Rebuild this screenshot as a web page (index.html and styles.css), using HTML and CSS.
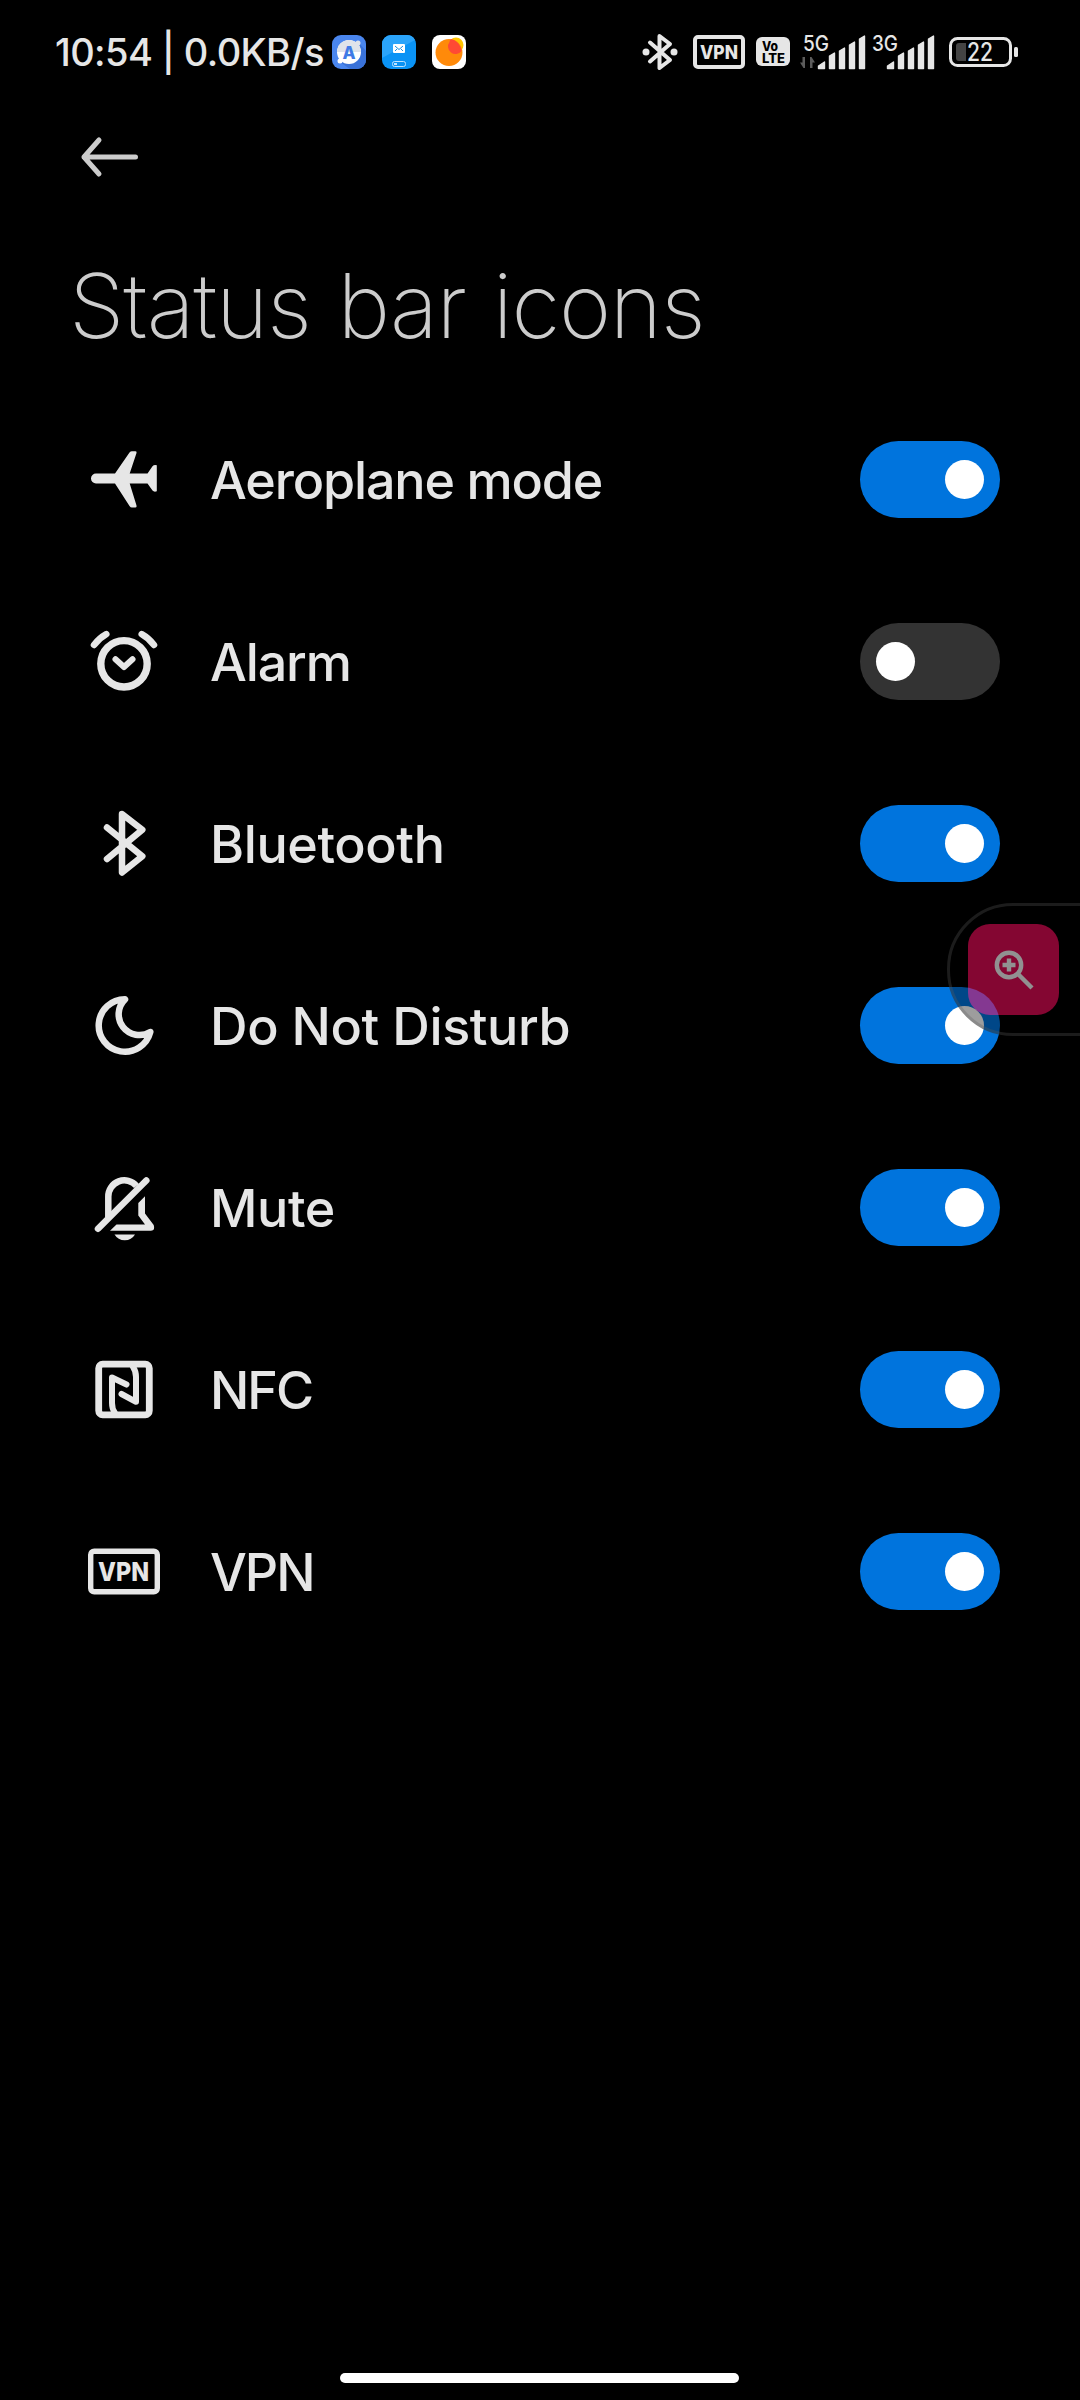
FILE: index.html
```html
<!DOCTYPE html>
<html lang="en">
<head>
  <meta charset="UTF-8">
  <meta name="viewport" content="width=device-width, initial-scale=1.0">
  <title>Status bar icons</title>
  <link rel="stylesheet" href="styles.css">
</head>
<body>
  <div class="screen">
    <header class="status-bar">
      <p class="clock">10:54 | 0.0KB/s</p>
      <div class="apps">
        <svg width="34" height="34" viewBox="0 0 34 34">
          <rect width="34" height="34" rx="9" fill="#4a86ee"/>
          <path d="M27 8l7 8v9a9 9 0 0 1-9 9h-7L8 27z" fill="#3a72d8"/>
          <circle cx="17" cy="17" r="12" fill="#fff"/>
          <path d="M5 17a12 12 0 0 1 24 0z" fill="#dfe3ea"/>
          <circle cx="26" cy="8" r="2.5" fill="#dfe3ea"/>
          <circle cx="8" cy="26" r="2.5" fill="#fff"/>
          <text class="app-letter" x="17" y="23.500" text-anchor="middle">A</text>
        </svg>
        <svg width="34" height="34" viewBox="0 0 34 34">
          <rect width="34" height="34" rx="9" fill="#0a93f5"/>
          <path d="M0 23V9a9 9 0 0 1 9-9h16a9 9 0 0 1 8 5z" fill="#2ba4fa"/>
          <rect x="11" y="9" width="12" height="9" rx="1" fill="#fff"/>
          <path d="M13 11l4 3.500 4-3.500M13 16l2-2M21 16l-2-2" fill="none" stroke="#1b8fe0" stroke-width="1"/>
          <rect x="10.500" y="26.500" width="13" height="5" rx="2" fill="none" stroke="#bfe3ff"/>
          <path d="M12 28h3v2h-3z" fill="#bfe3ff"/>
        </svg>
        <svg width="34" height="34" viewBox="0 0 34 34">
          <rect width="34" height="34" rx="8" fill="#fff"/>
          <circle cx="24" cy="10" r="7.500" fill="#ffc400"/>
          <circle cx="17" cy="17.500" r="13.500" fill="#ff8a0a"/>
          <path d="M17.500 7a7.500 7.500 0 0 0 12 9 13.500 13.500 0 0 0-10.500-12q-1.500 1-1.500 3z" fill="#ff4a34"/>
        </svg>
      </div>
      <div class="indicators">
        <svg class="bt" width="36" height="40" viewBox="0 0 36 40">
          <path d="M8 10.500L28 28 17.500 36V4L28 12 8 29.500" class="line" stroke-width="4"/>
          <circle cx="4" cy="20" r="3.500" fill="#e6e6e6"/>
          <circle cx="32" cy="20" r="3.500" fill="#e6e6e6"/>
        </svg>
        <svg class="vpn" width="52" height="34" viewBox="0 0 52 34">
          <rect x="2" y="2" width="48" height="30" rx="3" class="line" stroke-width="4"/>
          <text class="tag" x="7" y="24" font-size="19" textLength="38" lengthAdjust="spacingAndGlyphs">VPN</text>
        </svg>
        <svg class="volte" width="34" height="30" viewBox="0 0 34 30">
          <rect width="34" height="29" rx="6" fill="#e6e6e6"/>
          <text class="tag dark" x="6" y="13.500" font-size="13" textLength="16" lengthAdjust="spacingAndGlyphs">Vo</text>
          <text class="tag dark" x="6" y="26" font-size="13" textLength="23" lengthAdjust="spacingAndGlyphs">LTE</text>
        </svg>
        <svg class="signal" width="66" height="52" viewBox="0 -8 66 52">
          <text class="net" x="3" y="17" textLength="26" lengthAdjust="spacingAndGlyphs">5G</text>
          <path d="M5 23v11H3.500L0 28.500h2.500V23zM10 34V23h1.500l3.500 5.500h-2.500V34z" fill="#5c5c5c"/>
          <path d="M18.500 32l6-4v6.500h-6zM29.500 22l5-3v15.500h-5zM39.500 17l5-3v20.500h-5zM49.500 11l5-3v26.500h-5zM59.500 5l5-3v32.500h-5z" class="bars"/>
        </svg>
        <svg class="signal" width="66" height="52" viewBox="0 -8 66 52">
          <text class="net" x="3" y="17" textLength="26" lengthAdjust="spacingAndGlyphs">3G</text>
          <path d="M18.500 32l6-4v6.500h-6zM29.500 22l5-3v15.500h-5zM39.500 17l5-3v20.500h-5zM49.500 11l5-3v26.500h-5zM59.500 5l5-3v32.500h-5z" class="bars"/>
        </svg>
        <svg class="battery" width="70" height="30" viewBox="0 0 70 30">
          <rect x="1.500" y="1.500" width="60" height="27" rx="7" class="line" stroke-width="3"/>
          <path d="M10 6h7v18h-7a3 3 0 0 1-3-3V9a3 3 0 0 1 3-3z" fill="#444"/>
          <rect x="65" y="10" width="4" height="10" rx="1.500" fill="#e6e6e6"/>
          <text class="level" x="18" y="24" textLength="26" lengthAdjust="spacingAndGlyphs">22</text>
        </svg>
      </div>
    </header>

    <nav class="toolbar">
      <svg class="back" width="60" height="42" viewBox="0 0 60 42">
        <path d="M20 4L5 21l15 17M5 21h51.500" fill="none" stroke="#ccc" stroke-width="5" stroke-linecap="round" stroke-linejoin="round"/>
      </svg>
    </nav>

    <h1 class="title">Status bar icons</h1>

    <ul class="list">
      <li class="row">
        <svg class="icon" viewBox="0 0 80 80">
          <path fill="#e6e6e6" d="M12 34.500H31L45.500 13.500Q46.500 12.200 48 12.200H51.500Q53 12.200 52.500 14L45.700 34.500H63.500L68.500 27.300Q70 25.500 72.800 26.300V52.300Q70 53.300 68.500 51.500L63.500 44.500H45.700L52.500 66.500Q53 68.500 51.500 68.500H48Q46.500 68.500 45.500 67L31 44.500H12A5 5 0 0 1 12 34.500Z"/>
        </svg>
        <span class="label long">Aeroplane mode</span>
        <span class="switch on"></span>
      </li>
      <li class="row">
        <svg class="icon" viewBox="0 0 80 80">
          <circle cx="40" cy="42.800" r="23.200" class="line" stroke-width="7.400"/>
          <path d="M31.500 38.200L40 46l8.500-7.800" class="line" stroke-width="6"/>
          <path d="M10 24Q15 17.300 22.300 13.200M70 24Q65 17.300 57.700 13.200" class="line" stroke-width="6.500"/>
        </svg>
        <span class="label long">Alarm</span>
        <span class="switch"></span>
      </li>
      <li class="row">
        <svg class="icon" viewBox="0 0 80 80">
          <path d="M23 24.500L58.300 53.300 38 69.500V11L58.300 26.800 23 56" class="line" stroke-width="6.500"/>
        </svg>
        <span class="label">Bluetooth</span>
        <span class="switch on"></span>
      </li>
      <li class="row">
        <svg class="icon" viewBox="0 0 80 80">
          <path d="M41 14.300A26.200 26.200 0 1 0 66.300 47 20.800 20.800 0 0 1 41 14.300Z" class="line" stroke-width="6.500"/>
        </svg>
        <span class="label">Do Not Disturb</span>
        <span class="switch on"></span>
      </li>
      <li class="row">
        <svg class="icon" viewBox="0 0 80 80">
          <path d="M14 61.800L62.300 13.500" class="line" stroke-width="6.500"/>
          <path d="M24.300 50V29.500A16 16 0 0 1 52.500 19" class="line cut" stroke-width="6.500"/>
          <path fill="#e6e6e6" d="M54.300 36L61 29.200V46.500L69.700 58Q71.500 63.500 67 63.800H26L32.500 57.500H61L54.300 48.500Z"/>
          <path fill="#e6e6e6" d="M30.500 67.500h20.500q-3.500 5.800-10.250 5.800T30.500 67.500z"/>
        </svg>
        <span class="label">Mute</span>
        <span class="switch on"></span>
      </li>
      <li class="row">
        <svg class="icon" viewBox="0 0 80 80">
          <rect x="14.700" y="15.200" width="50.600" height="50.600" rx="4" class="line" stroke-width="6.800"/>
          <path d="M31 64Q28 60 28 54V28.500L42.500 35.500M49 18Q52 22 52 28V52.800L37.500 45" class="line" stroke-width="6"/>
        </svg>
        <span class="label caps">NFC</span>
        <span class="switch on"></span>
      </li>
      <li class="row">
        <svg class="icon" viewBox="0 0 80 80">
          <rect x="6.700" y="20.200" width="66.600" height="40.600" rx="3.500" class="line" stroke-width="5.400"/>
          <text class="tag" x="14" y="49.800" font-size="26" textLength="51" lengthAdjust="spacingAndGlyphs">VPN</text>
        </svg>
        <span class="label caps">VPN</span>
        <span class="switch on"></span>
      </li>
    </ul>

    <div class="bubble">
      <div class="bubble-btn">
        <svg width="44" height="44" viewBox="0 0 44 44">
          <g fill="none" stroke="#fff" stroke-width="4.400">
            <circle cx="17" cy="17" r="12.200"/>
            <path d="M10.500 17h13M17 10.500v13M26 26l14 14"/>
          </g>
        </svg>
      </div>
    </div>
    <div class="home-indicator"></div>
  </div>
</body>
</html>
```
FILE: styles.css
```css
* {
  margin: 0;
  padding: 0;
  box-sizing: border-box;
}
body {
  background-color: #000;
  font-family: Inter, Roboto, "Noto Sans", sans-serif;
  color: #e6e6e6;
}
.screen {
  width: 1080px;
  height: 2400px;
  position: relative;
  overflow: hidden;
}
svg {
  display: block;
  flex-shrink: 0;
}
.line {
  fill: none;
  stroke: #e6e6e6;
  stroke-linecap: round;
  stroke-linejoin: round;
}
.cut {
  stroke-linecap: butt;
}

/* status bar */
.status-bar {
  height: 104px;
  padding-left: 55px;
  display: flex;
  align-items: center;
}
.clock {
  width: 277px;
  font-size: 38px;
  font-weight: 450;
  letter-spacing: -0.6px;
  white-space: nowrap;
}
.apps {
  display: flex;
  gap: 16px;
}
.app-letter {
  font-size: 17px;
  font-weight: 800;
  fill: #3f7be6;
}
.indicators {
  margin-left: 176px;
  display: flex;
  align-items: center;
}
.vpn {
  margin-left: 15px;
}
.volte {
  margin-left: 11px;
}
.signal {
  margin-left: 10px;
}
.signal + .signal {
  margin-left: 3px;
}
.battery {
  margin-left: 14px;
}
.tag {
  font-weight: 800;
  fill: #e6e6e6;
}
.dark {
  fill: #000;
}
.net {
  font-size: 21px;
  font-weight: 500;
  fill: #e6e6e6;
}
.bars {
  fill: #e6e6e6;
  stroke: #e6e6e6;
  stroke-width: 1.4;
  stroke-linejoin: round;
}
.level {
  font-size: 25px;
  font-weight: 450;
  fill: #e6e6e6;
}

/* heading */
.toolbar {
  height: 106px;
  padding: 32px 0 0 79px;
}
.title {
  height: 178px;
  padding-left: 69px;
  line-height: 191px;
  font-size: 89px;
  font-weight: 250;
  letter-spacing: -1.2px;
  word-spacing: 3px;
  color: #ccc;
  white-space: nowrap;
}

/* settings list */
.list {
  list-style-type: none;
}
.row {
  height: 182px;
  padding: 0 80px 0 84px;
  display: flex;
  align-items: center;
}
.icon {
  width: 80px;
  height: 80px;
}
.label {
  flex: 1;
  margin-left: 46px;
  padding-top: 3px;
  font-size: 52px;
  font-weight: 480;
  letter-spacing: -0.4px;
  white-space: nowrap;
}
.label.long {
  letter-spacing: -1.15px;
}
.label.caps {
  letter-spacing: -2px;
}
.switch {
  width: 140px;
  height: 77px;
  padding: 0 16px;
  border-radius: 39px;
  background-color: #333;
  display: flex;
  align-items: center;
}
.switch::before {
  content: "";
  width: 39px;
  height: 39px;
  border-radius: 50%;
  background-color: #fff;
}
.switch.on {
  background-color: #0074dd;
  justify-content: flex-end;
}

/* floating zoom button */
.bubble {
  position: absolute;
  top: 903px;
  left: 947px;
  width: 160px;
  height: 133px;
  padding: 18px;
  border: 3px solid #323232;
  border-radius: 66px 0 0 66px;
  background-color: rgba(0, 0, 0, 0.67);
  opacity: 0.57;
}
.bubble-btn {
  width: 91px;
  height: 91px;
  border-radius: 22px;
  background-color: #e90b59;
  display: flex;
  align-items: center;
  justify-content: center;
}
.home-indicator {
  position: absolute;
  left: 340px;
  bottom: 17px;
  width: 399px;
  height: 10px;
  border-radius: 5px;
  background-color: #fff;
}
```
